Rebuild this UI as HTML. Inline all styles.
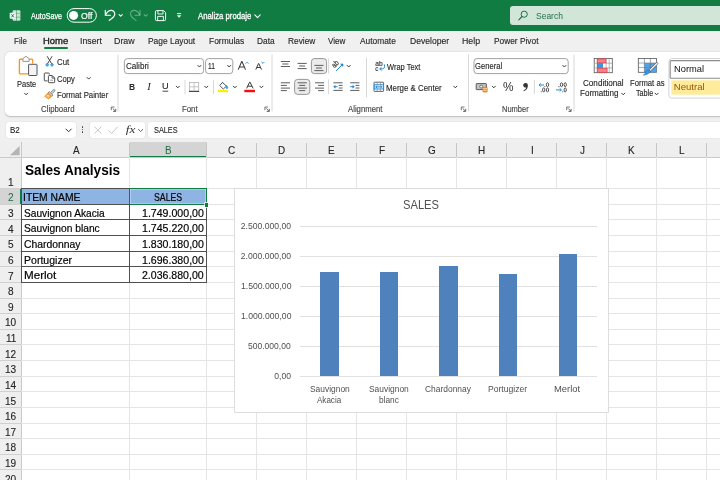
<!DOCTYPE html>
<html><head><meta charset="utf-8"><title>Excel</title>
<style>
html,body{margin:0;padding:0;}
body{width:720px;height:480px;overflow:hidden;position:relative;background:#fff;will-change:transform;font-family:"Liberation Sans",sans-serif;}
.t{position:absolute;white-space:nowrap;line-height:1;transform-origin:0 50%;display:block;}
.a{position:absolute;}
svg{position:absolute;overflow:visible;}

</style></head>
<body>
<div class="a" style="left:0px;top:0px;width:720px;height:31px;background:#107c41;"></div>
<div class="a" style="left:0px;top:31px;width:720px;height:111px;background:#f0f0f0;"></div>
<div class="a" style="left:5px;top:51.5px;width:720px;height:64px;background:#ffffff;border-radius:5px 0 0 5px;box-shadow:0 0.5px 1.5px rgba(0,0,0,.22);"></div>
<div class="a" style="left:44px;top:47px;width:24px;height:2px;background:#107c41;border-radius:1px;"></div>
<div class="a" style="left:510px;top:6px;width:215px;height:19.3px;background:#d1e5d9;border-radius:3px 0 0 3px;"></div>
<div class="a" style="left:5.6px;top:121.5px;width:70px;height:16px;background:#fff;border-radius:3px;box-shadow:0 0 0 0.5px #e2e2e2;"></div>
<div class="a" style="left:90px;top:121.5px;width:55px;height:16px;background:#fff;border-radius:3px;box-shadow:0 0 0 0.5px #e2e2e2;"></div>
<div class="a" style="left:148.4px;top:121.5px;width:580px;height:16px;background:#fff;border-radius:3px 0 0 3px;box-shadow:0 0 0 0.5px #e2e2e2;"></div>
<div class="a" style="left:81.7px;top:126.4px;width:1.5px;height:1.5px;background:#3c3c3c;border-radius:1px;"></div>
<div class="a" style="left:81.7px;top:128.9px;width:1.5px;height:1.5px;background:#3c3c3c;border-radius:1px;"></div>
<div class="a" style="left:81.7px;top:131.4px;width:1.5px;height:1.5px;background:#3c3c3c;border-radius:1px;"></div>
<div class="a" style="left:0px;top:142px;width:720px;height:15px;background:#efefef;"></div>
<div class="a" style="left:0px;top:157px;width:21px;height:323px;background:#efefef;"></div>
<div class="a" style="left:0px;top:157px;width:720px;height:0.8px;background:#c9c9c9;"></div>
<div class="a" style="left:20.6px;top:142px;width:0.9px;height:338px;background:#c9c9c9;"></div>
<div class="a" style="left:129.5px;top:142px;width:77px;height:15px;background:#d4d4d4;"></div>
<div class="a" style="left:129.5px;top:155.6px;width:77px;height:1.5px;background:#107c41;"></div>
<div class="a" style="left:0px;top:188.6px;width:21px;height:15.6px;background:#d4d4d4;"></div>
<div class="a" style="left:19.6px;top:188.6px;width:1.8px;height:15.6px;background:#107c41;"></div>
<svg style="left:9.5px;top:146px" width="10" height="9.5" viewBox="0 0 10 9.5"><path d="M9.6 0V9.3H0Z" fill="#b4b4b4"/></svg>
<div class="a" style="left:129.1px;top:143px;width:0.9px;height:14px;background:#c6c6c6;"></div>
<div class="a" style="left:129.1px;top:157px;width:0.9px;height:323px;background:#e5e5e5;"></div>
<div class="a" style="left:206.1px;top:143px;width:0.9px;height:14px;background:#c6c6c6;"></div>
<div class="a" style="left:206.1px;top:157px;width:0.9px;height:323px;background:#e5e5e5;"></div>
<div class="a" style="left:256.1px;top:143px;width:0.9px;height:14px;background:#c6c6c6;"></div>
<div class="a" style="left:256.1px;top:157px;width:0.9px;height:323px;background:#e5e5e5;"></div>
<div class="a" style="left:306.1px;top:143px;width:0.9px;height:14px;background:#c6c6c6;"></div>
<div class="a" style="left:306.1px;top:157px;width:0.9px;height:323px;background:#e5e5e5;"></div>
<div class="a" style="left:356.1px;top:143px;width:0.9px;height:14px;background:#c6c6c6;"></div>
<div class="a" style="left:356.1px;top:157px;width:0.9px;height:323px;background:#e5e5e5;"></div>
<div class="a" style="left:406.1px;top:143px;width:0.9px;height:14px;background:#c6c6c6;"></div>
<div class="a" style="left:406.1px;top:157px;width:0.9px;height:323px;background:#e5e5e5;"></div>
<div class="a" style="left:456.1px;top:143px;width:0.9px;height:14px;background:#c6c6c6;"></div>
<div class="a" style="left:456.1px;top:157px;width:0.9px;height:323px;background:#e5e5e5;"></div>
<div class="a" style="left:506.1px;top:143px;width:0.9px;height:14px;background:#c6c6c6;"></div>
<div class="a" style="left:506.1px;top:157px;width:0.9px;height:323px;background:#e5e5e5;"></div>
<div class="a" style="left:556.1px;top:143px;width:0.9px;height:14px;background:#c6c6c6;"></div>
<div class="a" style="left:556.1px;top:157px;width:0.9px;height:323px;background:#e5e5e5;"></div>
<div class="a" style="left:606.1px;top:143px;width:0.9px;height:14px;background:#c6c6c6;"></div>
<div class="a" style="left:606.1px;top:157px;width:0.9px;height:323px;background:#e5e5e5;"></div>
<div class="a" style="left:656.1px;top:143px;width:0.9px;height:14px;background:#c6c6c6;"></div>
<div class="a" style="left:656.1px;top:157px;width:0.9px;height:323px;background:#e5e5e5;"></div>
<div class="a" style="left:706.1px;top:143px;width:0.9px;height:14px;background:#c6c6c6;"></div>
<div class="a" style="left:706.1px;top:157px;width:0.9px;height:323px;background:#e5e5e5;"></div>
<div class="a" style="left:21px;top:188.2px;width:699px;height:0.9px;background:#e5e5e5;"></div>
<div class="a" style="left:0px;top:188.2px;width:21px;height:0.9px;background:#d0d0d0;"></div>
<div class="a" style="left:21px;top:203.825px;width:699px;height:0.9px;background:#e5e5e5;"></div>
<div class="a" style="left:0px;top:203.825px;width:21px;height:0.9px;background:#d0d0d0;"></div>
<div class="a" style="left:21px;top:219.45px;width:699px;height:0.9px;background:#e5e5e5;"></div>
<div class="a" style="left:0px;top:219.45px;width:21px;height:0.9px;background:#d0d0d0;"></div>
<div class="a" style="left:21px;top:235.075px;width:699px;height:0.9px;background:#e5e5e5;"></div>
<div class="a" style="left:0px;top:235.075px;width:21px;height:0.9px;background:#d0d0d0;"></div>
<div class="a" style="left:21px;top:250.7px;width:699px;height:0.9px;background:#e5e5e5;"></div>
<div class="a" style="left:0px;top:250.7px;width:21px;height:0.9px;background:#d0d0d0;"></div>
<div class="a" style="left:21px;top:266.32500000000005px;width:699px;height:0.9px;background:#e5e5e5;"></div>
<div class="a" style="left:0px;top:266.32500000000005px;width:21px;height:0.9px;background:#d0d0d0;"></div>
<div class="a" style="left:21px;top:281.95000000000005px;width:699px;height:0.9px;background:#e5e5e5;"></div>
<div class="a" style="left:0px;top:281.95000000000005px;width:21px;height:0.9px;background:#d0d0d0;"></div>
<div class="a" style="left:21px;top:297.57500000000005px;width:699px;height:0.9px;background:#e5e5e5;"></div>
<div class="a" style="left:0px;top:297.57500000000005px;width:21px;height:0.9px;background:#d0d0d0;"></div>
<div class="a" style="left:21px;top:313.20000000000005px;width:699px;height:0.9px;background:#e5e5e5;"></div>
<div class="a" style="left:0px;top:313.20000000000005px;width:21px;height:0.9px;background:#d0d0d0;"></div>
<div class="a" style="left:21px;top:328.82500000000005px;width:699px;height:0.9px;background:#e5e5e5;"></div>
<div class="a" style="left:0px;top:328.82500000000005px;width:21px;height:0.9px;background:#d0d0d0;"></div>
<div class="a" style="left:21px;top:344.45000000000005px;width:699px;height:0.9px;background:#e5e5e5;"></div>
<div class="a" style="left:0px;top:344.45000000000005px;width:21px;height:0.9px;background:#d0d0d0;"></div>
<div class="a" style="left:21px;top:360.07500000000005px;width:699px;height:0.9px;background:#e5e5e5;"></div>
<div class="a" style="left:0px;top:360.07500000000005px;width:21px;height:0.9px;background:#d0d0d0;"></div>
<div class="a" style="left:21px;top:375.70000000000005px;width:699px;height:0.9px;background:#e5e5e5;"></div>
<div class="a" style="left:0px;top:375.70000000000005px;width:21px;height:0.9px;background:#d0d0d0;"></div>
<div class="a" style="left:21px;top:391.32500000000005px;width:699px;height:0.9px;background:#e5e5e5;"></div>
<div class="a" style="left:0px;top:391.32500000000005px;width:21px;height:0.9px;background:#d0d0d0;"></div>
<div class="a" style="left:21px;top:406.95000000000005px;width:699px;height:0.9px;background:#e5e5e5;"></div>
<div class="a" style="left:0px;top:406.95000000000005px;width:21px;height:0.9px;background:#d0d0d0;"></div>
<div class="a" style="left:21px;top:422.57500000000005px;width:699px;height:0.9px;background:#e5e5e5;"></div>
<div class="a" style="left:0px;top:422.57500000000005px;width:21px;height:0.9px;background:#d0d0d0;"></div>
<div class="a" style="left:21px;top:438.20000000000005px;width:699px;height:0.9px;background:#e5e5e5;"></div>
<div class="a" style="left:0px;top:438.20000000000005px;width:21px;height:0.9px;background:#d0d0d0;"></div>
<div class="a" style="left:21px;top:453.82500000000005px;width:699px;height:0.9px;background:#e5e5e5;"></div>
<div class="a" style="left:0px;top:453.82500000000005px;width:21px;height:0.9px;background:#d0d0d0;"></div>
<div class="a" style="left:21px;top:469.45000000000005px;width:699px;height:0.9px;background:#e5e5e5;"></div>
<div class="a" style="left:0px;top:469.45000000000005px;width:21px;height:0.9px;background:#d0d0d0;"></div>
<div class="a" style="left:21px;top:485.07500000000005px;width:699px;height:0.9px;background:#e5e5e5;"></div>
<div class="a" style="left:0px;top:485.07500000000005px;width:21px;height:0.9px;background:#d0d0d0;"></div>
<div class="a" style="left:21.5px;top:188.9px;width:185px;height:16px;background:#8db4e2;"></div>
<div class="a" style="left:21px;top:188.15px;width:186px;height:0.95px;background:#505050;"></div>
<div class="a" style="left:21px;top:203.775px;width:186px;height:0.95px;background:#505050;"></div>
<div class="a" style="left:21px;top:219.4px;width:186px;height:0.95px;background:#505050;"></div>
<div class="a" style="left:21px;top:235.025px;width:186px;height:0.95px;background:#505050;"></div>
<div class="a" style="left:21px;top:250.65px;width:186px;height:0.95px;background:#505050;"></div>
<div class="a" style="left:21px;top:266.27500000000003px;width:186px;height:0.95px;background:#505050;"></div>
<div class="a" style="left:21px;top:281.90000000000003px;width:186px;height:0.95px;background:#505050;"></div>
<div class="a" style="left:20.75px;top:188.6px;width:0.95px;height:94.25000000000003px;background:#505050;"></div>
<div class="a" style="left:129.05px;top:188.6px;width:0.95px;height:94.25000000000003px;background:#505050;"></div>
<div class="a" style="left:206.05px;top:188.6px;width:0.95px;height:94.25000000000003px;background:#505050;"></div>
<div class="a" style="left:128.6px;top:187.7px;width:76.4px;height:15.2px;border:1.6px solid #107c41;box-shadow:inset 0 0 0 0.6px rgba(255,255,255,.55);"></div>
<div class="a" style="left:204.6px;top:203.1px;width:3.6px;height:3.6px;background:#107c41;box-shadow:0 0 0 0.7px #fff;"></div>
<div class="a" style="left:234.5px;top:188.5px;width:373.7px;height:223.7px;background:#fff;box-shadow:0 0 0 0.9px #dadada;"></div>
<div class="a" style="left:299.5px;top:225.8px;width:297.5px;height:0.9px;background:#e1e1e1;"></div>
<div class="a" style="left:299.5px;top:255.8px;width:297.5px;height:0.9px;background:#e1e1e1;"></div>
<div class="a" style="left:299.5px;top:285.8px;width:297.5px;height:0.9px;background:#e1e1e1;"></div>
<div class="a" style="left:299.5px;top:315.8px;width:297.5px;height:0.9px;background:#e1e1e1;"></div>
<div class="a" style="left:299.5px;top:345.8px;width:297.5px;height:0.9px;background:#e1e1e1;"></div>
<div class="a" style="left:299.5px;top:375.8px;width:297.5px;height:0.9px;background:#e1e1e1;"></div>
<div class="a" style="left:320px;top:271.6px;width:18.7px;height:104.69999999999999px;background:#4f81bd;"></div>
<div class="a" style="left:379.5px;top:271.8px;width:18.7px;height:104.5px;background:#4f81bd;"></div>
<div class="a" style="left:438.9px;top:266.4px;width:18.7px;height:109.90000000000003px;background:#4f81bd;"></div>
<div class="a" style="left:498.7px;top:274.4px;width:18.7px;height:101.90000000000003px;background:#4f81bd;"></div>
<div class="a" style="left:558.5px;top:254.1px;width:18.7px;height:122.20000000000002px;background:#4f81bd;"></div>
<svg width="720" height="480" viewBox="0 0 720 480" style="left:0;top:0">
<rect x="12.6" y="10.2" width="7.8" height="10.6" fill="rgba(255,255,255,.78)" stroke="none" stroke-width="0" rx="1.2" />
<line x1="16.6" y1="10.2" x2="16.6" y2="20.8" stroke="#107c41" stroke-width="0.7" opacity=".7"/>
<line x1="12.6" y1="13.7" x2="20.4" y2="13.7" stroke="#107c41" stroke-width="0.6" opacity=".6"/>
<line x1="12.6" y1="17.2" x2="20.4" y2="17.2" stroke="#107c41" stroke-width="0.6" opacity=".6"/>
<rect x="9.7" y="12.8" width="5.9" height="5.9" fill="#f2f8f4" stroke="none" stroke-width="0" rx="0.8" />
<path d="M11.4 14.2L13.9 17.4M13.9 14.2L11.4 17.4" stroke="#107c41" stroke-width="0.9" fill="none" />
<rect x="67.2" y="8.6" width="29.2" height="13.6" fill="none" stroke="#fff" stroke-width="1" rx="6.8" />
<circle cx="73.6" cy="15.4" r="4.5" fill="#fff"/>
<path d="M105.3 10.2V15.2H110.4" stroke="#fff" stroke-width="1.15" fill="none" stroke-linejoin="round" stroke-linecap="round"/>
<path d="M105.6 14.9C107.2 11.6 109.6 10.2 111.6 10.4C114 10.7 115.3 13 114.6 15.2C113.9 17.2 111.5 18.7 109.2 20.5" stroke="#fff" stroke-width="1.15" fill="none" stroke-linecap="round"/>
<path d="M119.10 14.60L120.70 16.20L122.30 14.60" stroke="#fff" stroke-width="1.05" fill="none" stroke-linecap="round" stroke-linejoin="round" opacity="1"/>
<path d="M140 10.2V15.2H134.9" stroke="#fff" stroke-width="1.1" fill="none" stroke-linejoin="round" stroke-linecap="round" opacity=".36"/>
<path d="M139.7 14.9C138.1 11.6 135.7 10.2 133.7 10.4C131.3 10.7 130 13 130.7 15.2C131.4 17.2 133.8 18.7 136.1 20.5" stroke="#fff" stroke-width="1.1" fill="none" stroke-linecap="round" opacity=".36"/>
<path d="M144.10 14.60L145.70 16.20L147.30 14.60" stroke="#fff" stroke-width="1.05" fill="none" stroke-linecap="round" stroke-linejoin="round" opacity="0.36"/>
<path d="M156.6 10.6H163.6L165.6 12.6V19.4Q165.6 20.6 164.4 20.6H156.6Q155.4 20.6 155.4 19.4V11.8Q155.4 10.6 156.6 10.6Z" stroke="#fff" stroke-width="1" fill="none" />
<path d="M157.9 10.8V14H163V10.8" stroke="#fff" stroke-width="0.9" fill="none" />
<path d="M157.6 20.4V16.4H163.4V20.4" stroke="#fff" stroke-width="0.9" fill="none" />
<line x1="177" y1="13.6" x2="181.2" y2="13.6" stroke="#fff" stroke-width="0.9" />
<path d="M177.3 15.4H180.9L179.1 17.6Z" stroke="#fff" stroke-width="0.4" fill="#fff" />
<path d="M254.80 14.85L257.50 17.55L260.20 14.85" stroke="#fff" stroke-width="1.1" fill="none" stroke-linecap="round" stroke-linejoin="round" opacity="1"/>
<circle cx="524.2" cy="14.2" r="3.1" fill="none" stroke="#26704a" stroke-width="1"/>
<line x1="522" y1="16.5" x2="518.8" y2="19.8" stroke="#26704a" stroke-width="1.1" stroke-linecap="round"/>
<line x1="118" y1="54.6" x2="118" y2="111.4" stroke="#d4d4d4" stroke-width="0.9" />
<line x1="272" y1="54.6" x2="272" y2="111.4" stroke="#d4d4d4" stroke-width="0.9" />
<line x1="468.5" y1="54.6" x2="468.5" y2="111.4" stroke="#d4d4d4" stroke-width="0.9" />
<line x1="574" y1="54.6" x2="574" y2="111.4" stroke="#d4d4d4" stroke-width="0.9" />
<line x1="366.5" y1="57.6" x2="366.5" y2="97.4" stroke="#d4d4d4" stroke-width="0.9" />
<line x1="185" y1="79.8" x2="185" y2="94.3" stroke="#d4d4d4" stroke-width="0.9" />
<line x1="213.5" y1="79.8" x2="213.5" y2="94.3" stroke="#d4d4d4" stroke-width="0.9" />
<line x1="534.4" y1="79.8" x2="534.4" y2="94.3" stroke="#d4d4d4" stroke-width="0.9" />
<line x1="328.6" y1="58.4" x2="328.6" y2="73.7" stroke="#d4d4d4" stroke-width="0.9" />
<line x1="328.6" y1="79.4" x2="328.6" y2="94.5" stroke="#d4d4d4" stroke-width="0.9" />
<path d="M114.5 107.0H111.30000000000001V110.19999999999999" stroke="#555" stroke-width="0.8" fill="none" />
<path d="M112.7 108.39999999999999L115.5 111.19999999999999M115.7 108.8V111.39999999999999H113.10000000000001" stroke="#555" stroke-width="0.9" fill="none" />
<path d="M268.1 107.0H264.9V110.19999999999999" stroke="#555" stroke-width="0.8" fill="none" />
<path d="M266.3 108.39999999999999L269.1 111.19999999999999M269.3 108.8V111.39999999999999H266.7" stroke="#555" stroke-width="0.9" fill="none" />
<path d="M464.5 107.0H461.29999999999995V110.19999999999999" stroke="#555" stroke-width="0.8" fill="none" />
<path d="M462.7 108.39999999999999L465.5 111.19999999999999M465.7 108.8V111.39999999999999H463.09999999999997" stroke="#555" stroke-width="0.9" fill="none" />
<path d="M569.9 107.0H566.6999999999999V110.19999999999999" stroke="#555" stroke-width="0.8" fill="none" />
<path d="M568.0999999999999 108.39999999999999L570.9 111.19999999999999M571.0999999999999 108.8V111.39999999999999H568.5" stroke="#555" stroke-width="0.9" fill="none" />
<path d="M22.8 59.2H20.3Q19.4 59.2 19.4 60.1V73Q19.4 73.9 20.3 73.9H28" stroke="#f7941d" stroke-width="1.35" fill="none" />
<path d="M29.3 59.2H31.8Q32.7 59.2 32.7 60.1V63.6" stroke="#f7941d" stroke-width="1.2" fill="none" />
<path d="M22.9 61.4V58.6L26 56.3L29.1 58.6V61.4Z" stroke="#8a8a8a" stroke-width="0.9" fill="#fff" />
<rect x="28.6" y="64.3" width="8.4" height="11.2" fill="#f4f4f4" stroke="#555" stroke-width="1" rx="0.6" />
<path d="M24.55 93.20L26.10 94.80L27.65 93.20" stroke="#3a3a3a" stroke-width="1.0" fill="none" stroke-linecap="round" stroke-linejoin="round" opacity="1"/>
<path d="M47.3 56.6L51.6 63.6M51.9 56.6L47.6 63.6" stroke="#444" stroke-width="1.0" fill="none" stroke-linecap="round"/>
<circle cx="47.2" cy="64.8" r="1.35" fill="#5aa8ea" stroke="#1a86d9" stroke-width=".6"/>
<circle cx="52" cy="64.8" r="1.35" fill="#5aa8ea" stroke="#1a86d9" stroke-width=".6"/>
<path d="M47.6 80.9H45Q44.3 80.9 44.3 80.2V73.7Q44.3 73 45 73H48.6Q49.3 73 49.3 73.7V74.6" stroke="#444" stroke-width="0.95" fill="none" />
<path d="M48.4 76.3Q48.4 75.5 49.2 75.5H52.2L54.7 78V81.9Q54.7 82.7 53.9 82.7H49.2Q48.4 82.7 48.4 81.9Z" stroke="#444" stroke-width="0.95" fill="#fff" />
<path d="M52.1 75.7V78.1H54.5" stroke="#444" stroke-width="0.8" fill="none" />
<line x1="50.2" y1="80.2" x2="53" y2="80.2" stroke="#666" stroke-width="0.7" />
<path d="M87.15 77.50L88.70 79.10L90.25 77.50" stroke="#3a3a3a" stroke-width="1.0" fill="none" stroke-linecap="round" stroke-linejoin="round" opacity="1"/>
<path d="M50.6 92.6L53.6 89.8Q54.2 89.3 54.7 89.8Q55.2 90.4 54.6 91L51.8 93.8" stroke="#666" stroke-width="0.9" fill="#eee" />
<path d="M49.3 91.6L52.9 95.2L51.6 96.3L48.2 92.9Z" stroke="#666" stroke-width="0.8" fill="#ddd" />
<path d="M48 93.3L51.1 96.5L48.6 98.7L44.9 96.4Z" stroke="#f7941d" stroke-width="1.1" fill="#fde0bd" stroke-linejoin="round"/>
<path d="M46.6 96.8L49.6 96.9" stroke="#f7941d" stroke-width="0.7" fill="none" />
<rect x="124.4" y="58.6" width="79.2" height="15" fill="#fff" stroke="#969696" stroke-width="0.9" rx="3" />
<rect x="205.6" y="58.6" width="27.2" height="15" fill="#fff" stroke="#969696" stroke-width="0.9" rx="3" />
<path d="M197.85 65.40L199.40 67.00L200.95 65.40" stroke="#3a3a3a" stroke-width="1.0" fill="none" stroke-linecap="round" stroke-linejoin="round" opacity="1"/>
<path d="M227.65 65.40L229.20 67.00L230.75 65.40" stroke="#3a3a3a" stroke-width="1.0" fill="none" stroke-linecap="round" stroke-linejoin="round" opacity="1"/>
<path d="M238.2 69.6L241.7 61.6H242L245.5 69.6M239.5 66.9H244.2" stroke="#3a3a3a" stroke-width="1.05" fill="none" />
<path d="M245.6 63.6L247 62.2L248.4 63.6" stroke="#1a86d9" stroke-width="0.9" fill="none" />
<path d="M255.8 69.6L258.5 63.5H258.8L261.5 69.6M256.8 67.5H260.5" stroke="#3a3a3a" stroke-width="1.0" fill="none" />
<path d="M261.6 62L263 63.4L264.4 62" stroke="#1a86d9" stroke-width="0.9" fill="none" />
<line x1="162.6" y1="91.2" x2="168.2" y2="91.2" stroke="#333" stroke-width="0.9" />
<path d="M176.25 86.20L177.80 87.80L179.35 86.20" stroke="#3a3a3a" stroke-width="1.0" fill="none" stroke-linecap="round" stroke-linejoin="round" opacity="1"/>
<rect x="189.5" y="82.5" width="9.2" height="8.8" fill="none" stroke="#b4b4b4" stroke-width="0.8" rx="0" />
<line x1="189.1" y1="91.4" x2="199.1" y2="91.4" stroke="#444" stroke-width="1.2" />
<line x1="194.1" y1="82.5" x2="194.1" y2="91.2" stroke="#b8b8b8" stroke-width="0.8" />
<line x1="189.7" y1="86.8" x2="198.5" y2="86.8" stroke="#b8b8b8" stroke-width="0.8" />
<path d="M204.75 86.20L206.30 87.80L207.85 86.20" stroke="#3a3a3a" stroke-width="1.0" fill="none" stroke-linecap="round" stroke-linejoin="round" opacity="1"/>
<path d="M222.6 82.5L226.4 86.1L223.3 89L219.7 85.5Z" stroke="#444" stroke-width="0.9" fill="#fff" stroke-linejoin="round"/>
<path d="M221 84L222.8 82.1" stroke="#444" stroke-width="0.8" fill="none" />
<path d="M226.6 85.4Q228.6 87.4 227.4 88.6Q226.2 89 226.2 87.4Z" stroke="#1a86d9" stroke-width="0.5" fill="#1a86d9" />
<rect x="217.6" y="89.8" width="10.5" height="2.4" fill="#fff000" stroke="none" stroke-width="1" rx="0" />
<path d="M233.35 86.20L234.90 87.80L236.45 86.20" stroke="#3a3a3a" stroke-width="1.0" fill="none" stroke-linecap="round" stroke-linejoin="round" opacity="1"/>
<path d="M246.6 88.4L249.7 82.1H250L253.1 88.4M247.8 86.2H252" stroke="#3a3a3a" stroke-width="1.0" fill="none" />
<rect x="244.3" y="89.8" width="10.7" height="2.4" fill="#f80d0d" stroke="none" stroke-width="1" rx="0" />
<path d="M259.85 86.20L261.40 87.80L262.95 86.20" stroke="#3a3a3a" stroke-width="1.0" fill="none" stroke-linecap="round" stroke-linejoin="round" opacity="1"/>
<line x1="280.8" y1="61.5" x2="290" y2="61.5" stroke="#555" stroke-width="0.95" />
<line x1="282.36" y1="64" x2="288.44" y2="64" stroke="#555" stroke-width="0.95" />
<line x1="280.8" y1="66.5" x2="290" y2="66.5" stroke="#555" stroke-width="0.95" />
<line x1="297.6" y1="63.4" x2="306.7" y2="63.4" stroke="#555" stroke-width="0.95" />
<line x1="299.15" y1="66" x2="305.15" y2="66" stroke="#555" stroke-width="0.95" />
<line x1="297.6" y1="68.6" x2="306.7" y2="68.6" stroke="#555" stroke-width="0.95" />
<rect x="311.4" y="58.6" width="15.2" height="15" fill="#ebebeb" stroke="#8c8c8c" stroke-width="0.9" rx="3" />
<line x1="314.4" y1="65.4" x2="323.5" y2="65.4" stroke="#555" stroke-width="0.95" />
<line x1="315.95" y1="68" x2="321.95" y2="68" stroke="#555" stroke-width="0.95" />
<line x1="314.4" y1="70.6" x2="323.5" y2="70.6" stroke="#555" stroke-width="0.95" />
<text x="334.2" y="68.2" font-family="Liberation Sans, sans-serif" font-size="7.4" fill="#333" stroke="#333" stroke-width=".2" textLength="7" lengthAdjust="spacingAndGlyphs" transform="rotate(-42 334.2 68.2)">ab</text>
<path d="M336.2 70.7L342.3 64.6" stroke="#1a86d9" stroke-width="1.0" fill="none" stroke-linecap="round"/>
<path d="M340.6 64H343V66.4Z" stroke="#1a86d9" stroke-width="0.6" fill="#1a86d9" stroke-linejoin="round"/>
<path d="M347.15 65.40L348.70 67.00L350.25 65.40" stroke="#3a3a3a" stroke-width="1.0" fill="none" stroke-linecap="round" stroke-linejoin="round" opacity="1"/>
<line x1="280.8" y1="82.8" x2="290" y2="82.8" stroke="#555" stroke-width="0.95" />
<line x1="280.8" y1="85.4" x2="286.87" y2="85.4" stroke="#555" stroke-width="0.95" />
<line x1="280.8" y1="88.1" x2="290" y2="88.1" stroke="#555" stroke-width="0.95" />
<line x1="280.8" y1="90.6" x2="286.87" y2="90.6" stroke="#555" stroke-width="0.95" />
<rect x="294.6" y="79.4" width="15.2" height="15" fill="#ebebeb" stroke="#8c8c8c" stroke-width="0.9" rx="3" />
<line x1="297.6" y1="82.8" x2="306.8" y2="82.8" stroke="#555" stroke-width="0.95" />
<line x1="299.16" y1="85.4" x2="305.24" y2="85.4" stroke="#555" stroke-width="0.95" />
<line x1="297.6" y1="88.1" x2="306.8" y2="88.1" stroke="#555" stroke-width="0.95" />
<line x1="299.16" y1="90.6" x2="305.24" y2="90.6" stroke="#555" stroke-width="0.95" />
<line x1="315" y1="82.8" x2="324.1" y2="82.8" stroke="#555" stroke-width="0.95" />
<line x1="318.09" y1="85.4" x2="324.1" y2="85.4" stroke="#555" stroke-width="0.95" />
<line x1="315" y1="88.1" x2="324.1" y2="88.1" stroke="#555" stroke-width="0.95" />
<line x1="318.09" y1="90.6" x2="324.1" y2="90.6" stroke="#555" stroke-width="0.95" />
<line x1="333.4" y1="82.8" x2="342.59999999999997" y2="82.8" stroke="#555" stroke-width="0.95" />
<line x1="333.4" y1="90.4" x2="342.59999999999997" y2="90.4" stroke="#555" stroke-width="0.95" />
<line x1="338.79999999999995" y1="85.4" x2="342.59999999999997" y2="85.4" stroke="#555" stroke-width="0.95" />
<line x1="338.79999999999995" y1="88" x2="342.59999999999997" y2="88" stroke="#555" stroke-width="0.95" />
<path d="M334.4 86.7H337.59999999999997" stroke="#1a86d9" stroke-width="0.95" fill="none" />
<path d="M335.29999999999995 85.2L333.4 86.7L335.29999999999995 88.2Z" stroke="#1a86d9" stroke-width="0.3" fill="#1a86d9" />
<line x1="350.2" y1="82.8" x2="359.4" y2="82.8" stroke="#555" stroke-width="0.95" />
<line x1="350.2" y1="90.4" x2="359.4" y2="90.4" stroke="#555" stroke-width="0.95" />
<line x1="355.59999999999997" y1="85.4" x2="359.4" y2="85.4" stroke="#555" stroke-width="0.95" />
<line x1="355.59999999999997" y1="88" x2="359.4" y2="88" stroke="#555" stroke-width="0.95" />
<path d="M350.2 86.7H353.4" stroke="#1a86d9" stroke-width="0.95" fill="none" />
<path d="M352.59999999999997 85.2L354.5 86.7L352.59999999999997 88.2Z" stroke="#1a86d9" stroke-width="0.3" fill="#1a86d9" />
<text x="375.3" y="66.4" font-family="Liberation Sans, sans-serif" font-size="6.8" fill="#333" stroke="#333" stroke-width=".15" textLength="7.4" lengthAdjust="spacingAndGlyphs">ab</text>
<text x="375.3" y="70.8" font-family="Liberation Sans, sans-serif" font-size="6.8" fill="#333" stroke="#333" stroke-width=".15" textLength="3.1" lengthAdjust="spacingAndGlyphs">c</text>
<path d="M384.3 64.4Q385.2 68.9 382.4 68.9H379.9" stroke="#1a86d9" stroke-width="1.0" fill="none" />
<path d="M381.5 67.2L379.7 68.9L381.5 70.6" stroke="#1a86d9" stroke-width="1.0" fill="none" />
<rect x="374" y="82.2" width="9.6" height="9.2" fill="#fff" stroke="#555" stroke-width="0.9" rx="0.5" />
<rect x="374.3" y="84.7" width="9" height="4.3" fill="#d6ebfc" stroke="#1a86d9" stroke-width="0.8" rx="0" />
<line x1="377.2" y1="82.2" x2="377.2" y2="84.6" stroke="#777" stroke-width="0.6" />
<line x1="380.4" y1="82.2" x2="380.4" y2="84.6" stroke="#777" stroke-width="0.6" />
<line x1="377.2" y1="89.1" x2="377.2" y2="91.4" stroke="#777" stroke-width="0.6" />
<line x1="380.4" y1="89.1" x2="380.4" y2="91.4" stroke="#777" stroke-width="0.6" />
<path d="M375.8 86.85H381.8M377.2 85.7L375.8 86.85L377.2 88M380.4 85.7L381.8 86.85L380.4 88" stroke="#1272c4" stroke-width="0.75" fill="none" />
<path d="M453.75 86.20L455.30 87.80L456.85 86.20" stroke="#3a3a3a" stroke-width="1.0" fill="none" stroke-linecap="round" stroke-linejoin="round" opacity="1"/>
<rect x="474" y="58.6" width="94.2" height="15" fill="#fff" stroke="#969696" stroke-width="0.9" rx="3" />
<path d="M562.85 65.40L564.40 67.00L565.95 65.40" stroke="#3a3a3a" stroke-width="1.0" fill="none" stroke-linecap="round" stroke-linejoin="round" opacity="1"/>
<rect x="476.2" y="83.6" width="10.2" height="6" fill="#c4c4c4" stroke="#4a4a4a" stroke-width="0.9" rx="0.5" />
<circle cx="481.2" cy="86.6" r="1.5" fill="#e8e8e8" stroke="#555" stroke-width=".7"/>
<rect x="482.9" y="87.2" width="4.3" height="4.9" fill="#f7941d" stroke="#d9730b" stroke-width="0.6" rx="0.6" />
<line x1="483" y1="88.6" x2="487" y2="88.6" stroke="#fff" stroke-width="0.5" />
<line x1="483" y1="90.3" x2="487" y2="90.3" stroke="#fff" stroke-width="0.5" />
<path d="M492.25 86.20L493.80 87.80L495.35 86.20" stroke="#3a3a3a" stroke-width="1.0" fill="none" stroke-linecap="round" stroke-linejoin="round" opacity="1"/>
<path d="M525.6 82.9A2.3 2.3 0 1 0 526.4 87.3Q526 89.4 523.4 90.6L523.8 91.2Q527.9 89.6 527.9 85.3A2.3 2.3 0 0 0 525.6 82.9Z" stroke="none" stroke-width="0" fill="#333" />
<path d="M539.1 85H544M540.7 83.4L539.1 85L540.7 86.6" stroke="#1a86d9" stroke-width="0.95" fill="none" />
<circle cx="544.9" cy="86.6" r=".55" fill="#3c3c3c"/>
<ellipse cx="547.5" cy="84.7" rx="1.15" ry="1.95" fill="none" stroke="#3c3c3c" stroke-width=".9"/>
<circle cx="541.2" cy="91.8" r=".55" fill="#3c3c3c"/>
<ellipse cx="543.7" cy="89.9" rx="1.15" ry="1.95" fill="none" stroke="#3c3c3c" stroke-width=".9"/>
<ellipse cx="547.5" cy="89.9" rx="1.15" ry="1.95" fill="none" stroke="#3c3c3c" stroke-width=".9"/>
<circle cx="558.9" cy="86.6" r=".55" fill="#3c3c3c"/>
<ellipse cx="561.5" cy="84.7" rx="1.15" ry="1.95" fill="none" stroke="#3c3c3c" stroke-width=".9"/>
<ellipse cx="565.2" cy="84.7" rx="1.15" ry="1.95" fill="none" stroke="#3c3c3c" stroke-width=".9"/>
<path d="M556 89.9H561.3M559.7 88.3L561.3 89.9L559.7 91.5" stroke="#1a86d9" stroke-width="0.95" fill="none" />
<circle cx="562.8" cy="91.8" r=".55" fill="#3c3c3c"/>
<ellipse cx="565.2" cy="89.9" rx="1.15" ry="1.95" fill="none" stroke="#3c3c3c" stroke-width=".9"/>
<rect x="594.2" y="58.5" width="18.1" height="14.2" fill="#fff" stroke="#555" stroke-width="0.8" rx="0" />
<line x1="597.2" y1="58.5" x2="597.2" y2="72.7" stroke="#8a8a8a" stroke-width="0.6" />
<line x1="606.1" y1="58.5" x2="606.1" y2="72.7" stroke="#8a8a8a" stroke-width="0.6" />
<line x1="609.2" y1="58.5" x2="609.2" y2="72.7" stroke="#8a8a8a" stroke-width="0.6" />
<line x1="594.2" y1="63.2" x2="612.3" y2="63.2" stroke="#8a8a8a" stroke-width="0.6" />
<line x1="594.2" y1="67.9" x2="612.3" y2="67.9" stroke="#8a8a8a" stroke-width="0.6" />
<rect x="597.3" y="58.9" width="8.7" height="3.9" fill="#f57f8b" stroke="#e03a48" stroke-width="0.7" rx="0" />
<rect x="597.3" y="63.7" width="5.4" height="3.7" fill="#3a96e3" stroke="#1a78c8" stroke-width="0.6" rx="0" />
<rect x="597.3" y="68.4" width="9.8" height="3.9" fill="#f57f8b" stroke="#e03a48" stroke-width="0.7" rx="0" />
<path d="M621.65 93.20L623.20 94.80L624.75 93.20" stroke="#3a3a3a" stroke-width="1.0" fill="none" stroke-linecap="round" stroke-linejoin="round" opacity="1"/>
<rect x="638.3" y="58.5" width="18.2" height="13.8" fill="#fff" stroke="#555" stroke-width="0.8" rx="0" />
<rect x="644.4" y="63" width="12.1" height="9.3" fill="#4fa3e8" stroke="none" stroke-width="1" rx="0" />
<line x1="644.4" y1="58.5" x2="644.4" y2="72.3" stroke="#5a6a7a" stroke-width="0.6" />
<line x1="650.4" y1="58.5" x2="650.4" y2="72.3" stroke="#5a6a7a" stroke-width="0.6" />
<line x1="638.3" y1="63" x2="656.5" y2="63" stroke="#6a7a8a" stroke-width="0.6" />
<line x1="638.3" y1="67.6" x2="656.5" y2="67.6" stroke="#6a7a8a" stroke-width="0.6" />
<path d="M657.4 62.6Q658.3 63.4 657.5 64.3L650.2 71.3L648.9 70L656.2 62.8Q656.8 62.2 657.4 62.6Z" stroke="#666" stroke-width="0.8" fill="#f2f2f2" />
<path d="M649 70L650.3 71.3Q649.4 74.4 643.4 75.2Q646 73 645.7 71.2Q647 69.2 649 70Z" stroke="#1f6fbe" stroke-width="0.6" fill="#3a96e3" />
<path d="M655.05 93.20L656.60 94.80L658.15 93.20" stroke="#3a3a3a" stroke-width="1.0" fill="none" stroke-linecap="round" stroke-linejoin="round" opacity="1"/>
<rect x="668.9" y="58.5" width="60" height="39.6" fill="#fff" stroke="#d0d0d0" stroke-width="0.9" rx="3" />
<rect x="670.2" y="60.6" width="60" height="17.6" fill="#fff" stroke="#8a8a8a" stroke-width="1.1" rx="1" />
<rect x="671.4" y="80.3" width="60" height="14.4" fill="#ffeb9c" stroke="none" stroke-width="1" rx="0" />
<path d="M65.90 129.05L68.60 131.75L71.30 129.05" stroke="#333" stroke-width="1.0" fill="none" stroke-linecap="round" stroke-linejoin="round" opacity="1"/>
<path d="M94.4 126.6L101.4 133.6M101.4 126.6L94.4 133.6" stroke="#c2c2c2" stroke-width="0.9" fill="none" />
<path d="M108.6 130.4L111.6 133.5L117.8 126.6" stroke="#c2c2c2" stroke-width="0.9" fill="none" />
<text x="125.8" y="133.2" font-family="Liberation Serif, serif" font-style="italic" font-size="10.5" fill="#333" textLength="9.6" lengthAdjust="spacingAndGlyphs">fx</text>
<path d="M138.40 129.30L140.60 131.50L142.80 129.30" stroke="#666" stroke-width="1.0" fill="none" stroke-linecap="round" stroke-linejoin="round" opacity="1"/>
</svg>
<span class="t" style="left:31.25px;top:11.70px;font-size:8.5px;color:#ffffff;transform:scaleX(0.843);-webkit-text-stroke:0.25px #fff;">AutoSave</span>
<span class="t" style="left:81.09px;top:11.70px;font-size:8.5px;color:#ffffff;transform:scaleX(1.017);-webkit-text-stroke:0.2px #fff;">Off</span>
<span class="t" style="left:198.00px;top:12.06px;font-size:8.8px;color:#ffffff;transform:scaleX(0.879);-webkit-text-stroke:0.28px #fff;">Analiza prodaje</span>
<span class="t" style="left:536.11px;top:11.76px;font-size:8.8px;color:#26704a;transform:scaleX(0.965);">Search</span>
<span class="t" style="left:13.88px;top:36.86px;font-size:9px;color:#262626;transform:scaleX(0.892);-webkit-text-stroke:0.13px;">File</span>
<span class="t" style="left:43.27px;top:36.86px;font-size:9px;color:#1a1a1a;transform:scaleX(1.046);-webkit-text-stroke:0.32px #1a1a1a;">Home</span>
<span class="t" style="left:79.72px;top:36.86px;font-size:9px;color:#262626;transform:scaleX(0.970);-webkit-text-stroke:0.13px;">Insert</span>
<span class="t" style="left:114.31px;top:36.86px;font-size:9px;color:#262626;transform:scaleX(0.983);-webkit-text-stroke:0.13px;">Draw</span>
<span class="t" style="left:147.85px;top:36.86px;font-size:9px;color:#262626;transform:scaleX(0.934);-webkit-text-stroke:0.13px;">Page Layout</span>
<span class="t" style="left:208.84px;top:36.86px;font-size:9px;color:#262626;transform:scaleX(0.938);-webkit-text-stroke:0.13px;">Formulas</span>
<span class="t" style="left:256.85px;top:36.86px;font-size:9px;color:#262626;transform:scaleX(0.926);-webkit-text-stroke:0.13px;">Data</span>
<span class="t" style="left:287.60px;top:36.86px;font-size:9px;color:#262626;transform:scaleX(0.927);-webkit-text-stroke:0.13px;">Review</span>
<span class="t" style="left:327.50px;top:36.86px;font-size:9px;color:#262626;transform:scaleX(0.902);-webkit-text-stroke:0.13px;">View</span>
<span class="t" style="left:360.00px;top:36.86px;font-size:9px;color:#262626;transform:scaleX(0.930);-webkit-text-stroke:0.13px;">Automate</span>
<span class="t" style="left:409.83px;top:36.86px;font-size:9px;color:#262626;transform:scaleX(0.952);-webkit-text-stroke:0.13px;">Developer</span>
<span class="t" style="left:461.82px;top:36.86px;font-size:9px;color:#262626;transform:scaleX(0.974);-webkit-text-stroke:0.13px;">Help</span>
<span class="t" style="left:493.60px;top:36.86px;font-size:9px;color:#262626;transform:scaleX(0.926);-webkit-text-stroke:0.13px;">Power Pivot</span>
<span class="t" style="left:16.89px;top:79.60px;font-size:8.6px;color:#262626;transform:scaleX(0.871);-webkit-text-stroke:0.13px;">Paste</span>
<span class="t" style="left:57.14px;top:57.55px;font-size:8.6px;color:#262626;transform:scaleX(0.908);-webkit-text-stroke:0.13px;">Cut</span>
<span class="t" style="left:57.14px;top:74.65px;font-size:8.6px;color:#262626;transform:scaleX(0.889);-webkit-text-stroke:0.13px;">Copy</span>
<span class="t" style="left:56.87px;top:91.35px;font-size:8.6px;color:#262626;transform:scaleX(0.901);-webkit-text-stroke:0.13px;">Format Painter</span>
<span class="t" style="left:41.37px;top:106.15px;font-size:8.2px;color:#444;transform:scaleX(0.958);-webkit-text-stroke:0.13px;">Clipboard</span>
<span class="t" style="left:182.38px;top:106.15px;font-size:8.2px;color:#444;transform:scaleX(0.954);-webkit-text-stroke:0.13px;">Font</span>
<span class="t" style="left:347.50px;top:106.15px;font-size:8.2px;color:#444;transform:scaleX(0.947);-webkit-text-stroke:0.13px;">Alignment</span>
<span class="t" style="left:502.40px;top:106.15px;font-size:8.2px;color:#444;transform:scaleX(0.916);-webkit-text-stroke:0.13px;">Number</span>
<span class="t" style="left:125.87px;top:62.10px;font-size:8.6px;color:#262626;transform:scaleX(0.940);-webkit-text-stroke:0.13px;">Calibri</span>
<span class="t" style="left:207.80px;top:62.10px;font-size:8.6px;color:#262626;transform:scaleX(0.773);-webkit-text-stroke:0.13px;">11</span>
<span class="t" style="left:129.27px;top:82.17px;font-size:9.5px;color:#262626;font-weight:700;transform:scaleX(0.889);">B</span>
<span class="t" style="left:147.20px;top:81.69px;font-size:10.5px;color:#262626;font-style:italic;font-family:'Liberation Serif',serif;">I</span>
<span class="t" style="left:162.04px;top:81.96px;font-size:9px;color:#262626;transform:scaleX(1.019);-webkit-text-stroke:0.13px;">U</span>
<span class="t" style="left:387.00px;top:62.85px;font-size:8.6px;color:#262626;transform:scaleX(0.870);-webkit-text-stroke:0.13px;">Wrap Text</span>
<span class="t" style="left:386.36px;top:83.75px;font-size:8.6px;color:#262626;transform:scaleX(0.918);-webkit-text-stroke:0.13px;">Merge &amp; Center</span>
<span class="t" style="left:475.40px;top:62.10px;font-size:8.6px;color:#262626;transform:scaleX(0.886);-webkit-text-stroke:0.13px;">General</span>
<span class="t" style="left:502.87px;top:81.17px;font-size:12.5px;color:#333;transform:scaleX(0.947);">%</span>
<span class="t" style="left:582.82px;top:79.15px;font-size:8.6px;color:#262626;transform:scaleX(0.944);-webkit-text-stroke:0.13px;">Conditional</span>
<span class="t" style="left:580.24px;top:89.35px;font-size:8.6px;color:#262626;transform:scaleX(0.938);-webkit-text-stroke:0.13px;">Formatting</span>
<span class="t" style="left:629.98px;top:79.15px;font-size:8.6px;color:#262626;transform:scaleX(0.891);-webkit-text-stroke:0.13px;">Format as</span>
<span class="t" style="left:635.57px;top:89.35px;font-size:8.6px;color:#262626;transform:scaleX(0.837);-webkit-text-stroke:0.13px;">Table</span>
<span class="t" style="left:673.77px;top:63.97px;font-size:9.6px;color:#111;transform:scaleX(0.971);">Normal</span>
<span class="t" style="left:673.75px;top:82.47px;font-size:9.6px;color:#9c5700;">Neutral</span>
<span class="t" style="left:9.61px;top:125.62px;font-size:9.3px;color:#262626;transform:scaleX(0.858);-webkit-text-stroke:0.13px;">B2</span>
<span class="t" style="left:154.38px;top:125.62px;font-size:9.3px;color:#262626;transform:scaleX(0.788);-webkit-text-stroke:0.13px;">SALES</span>
<span class="t" style="left:73.09px;top:144.69px;font-size:10.8px;color:#262626;transform:scaleX(0.920);-webkit-text-stroke:0.13px;">A</span>
<span class="t" style="left:228.27px;top:144.69px;font-size:10.8px;color:#262626;transform:scaleX(0.920);-webkit-text-stroke:0.13px;">C</span>
<span class="t" style="left:278.15px;top:144.69px;font-size:10.8px;color:#262626;transform:scaleX(0.920);-webkit-text-stroke:0.13px;">D</span>
<span class="t" style="left:328.40px;top:144.69px;font-size:10.8px;color:#262626;transform:scaleX(0.920);-webkit-text-stroke:0.13px;">E</span>
<span class="t" style="left:378.66px;top:144.69px;font-size:10.8px;color:#262626;transform:scaleX(0.920);-webkit-text-stroke:0.13px;">F</span>
<span class="t" style="left:428.17px;top:144.69px;font-size:10.8px;color:#262626;transform:scaleX(0.920);-webkit-text-stroke:0.13px;">G</span>
<span class="t" style="left:478.31px;top:144.69px;font-size:10.8px;color:#262626;transform:scaleX(0.920);-webkit-text-stroke:0.13px;">H</span>
<span class="t" style="left:530.52px;top:144.69px;font-size:10.8px;color:#262626;transform:scaleX(0.920);-webkit-text-stroke:0.13px;">I</span>
<span class="t" style="left:579.72px;top:144.69px;font-size:10.8px;color:#262626;transform:scaleX(0.920);-webkit-text-stroke:0.13px;">J</span>
<span class="t" style="left:628.24px;top:144.69px;font-size:10.8px;color:#262626;transform:scaleX(0.920);-webkit-text-stroke:0.13px;">K</span>
<span class="t" style="left:678.91px;top:144.69px;font-size:10.8px;color:#262626;transform:scaleX(0.920);-webkit-text-stroke:0.13px;">L</span>
<span class="t" style="left:164.95px;top:144.69px;font-size:10.8px;color:#1e6b41;transform:scaleX(0.920);">B</span>
<span class="t" style="left:8.05px;top:177.09px;font-size:10.6px;color:#262626;transform:scaleX(0.950);-webkit-text-stroke:0.13px;">1</span>
<span class="t" style="left:8.20px;top:192.49px;font-size:10.6px;color:#1e6b41;transform:scaleX(0.950);">2</span>
<span class="t" style="left:8.22px;top:208.12px;font-size:10.6px;color:#262626;transform:scaleX(0.950);-webkit-text-stroke:0.13px;">3</span>
<span class="t" style="left:8.25px;top:223.74px;font-size:10.6px;color:#262626;transform:scaleX(0.950);-webkit-text-stroke:0.13px;">4</span>
<span class="t" style="left:8.22px;top:239.37px;font-size:10.6px;color:#262626;transform:scaleX(0.950);-webkit-text-stroke:0.13px;">5</span>
<span class="t" style="left:8.17px;top:254.99px;font-size:10.6px;color:#262626;transform:scaleX(0.950);-webkit-text-stroke:0.13px;">6</span>
<span class="t" style="left:8.20px;top:270.62px;font-size:10.6px;color:#262626;transform:scaleX(0.950);-webkit-text-stroke:0.13px;">7</span>
<span class="t" style="left:8.20px;top:286.24px;font-size:10.6px;color:#262626;transform:scaleX(0.950);-webkit-text-stroke:0.13px;">8</span>
<span class="t" style="left:8.22px;top:301.87px;font-size:10.6px;color:#262626;transform:scaleX(0.950);-webkit-text-stroke:0.13px;">9</span>
<span class="t" style="left:5.21px;top:317.49px;font-size:10.6px;color:#262626;transform:scaleX(0.950);-webkit-text-stroke:0.13px;">10</span>
<span class="t" style="left:5.63px;top:333.12px;font-size:10.6px;color:#262626;transform:scaleX(0.950);-webkit-text-stroke:0.13px;">11</span>
<span class="t" style="left:5.25px;top:348.74px;font-size:10.6px;color:#262626;transform:scaleX(0.950);-webkit-text-stroke:0.13px;">12</span>
<span class="t" style="left:5.23px;top:364.37px;font-size:10.6px;color:#262626;transform:scaleX(0.950);-webkit-text-stroke:0.13px;">13</span>
<span class="t" style="left:5.16px;top:379.99px;font-size:10.6px;color:#262626;transform:scaleX(0.950);-webkit-text-stroke:0.13px;">14</span>
<span class="t" style="left:5.23px;top:395.62px;font-size:10.6px;color:#262626;transform:scaleX(0.950);-webkit-text-stroke:0.13px;">15</span>
<span class="t" style="left:5.23px;top:411.24px;font-size:10.6px;color:#262626;transform:scaleX(0.950);-webkit-text-stroke:0.13px;">16</span>
<span class="t" style="left:5.25px;top:426.87px;font-size:10.6px;color:#262626;transform:scaleX(0.950);-webkit-text-stroke:0.13px;">17</span>
<span class="t" style="left:5.23px;top:442.49px;font-size:10.6px;color:#262626;transform:scaleX(0.950);-webkit-text-stroke:0.13px;">18</span>
<span class="t" style="left:5.25px;top:458.12px;font-size:10.6px;color:#262626;transform:scaleX(0.950);-webkit-text-stroke:0.13px;">19</span>
<span class="t" style="left:5.35px;top:473.74px;font-size:10.6px;color:#262626;transform:scaleX(0.950);-webkit-text-stroke:0.13px;">20</span>
<span class="t" style="left:24.79px;top:162.28px;font-size:15.4px;color:#000;font-weight:700;transform:scaleX(0.888);">Sales Analysis</span>
<span class="t" style="left:23.34px;top:193.18px;font-size:10.2px;color:#000;transform:scaleX(1.016);-webkit-text-stroke:0.18px #000;">ITEM NAME</span>
<span class="t" style="left:153.91px;top:193.18px;font-size:10.2px;color:#000;transform:scaleX(0.857);-webkit-text-stroke:0.18px #000;">SALES</span>
<span class="t" style="left:24.15px;top:208.81px;font-size:10.2px;color:#000;transform:scaleX(0.996);-webkit-text-stroke:0.18px #000;">Sauvignon Akacia</span>
<span class="t" style="left:142.22px;top:208.81px;font-size:10.2px;color:#000;transform:scaleX(1.040);-webkit-text-stroke:0.18px #000;">1.749.000,00</span>
<span class="t" style="left:24.15px;top:224.43px;font-size:10.2px;color:#000;transform:scaleX(1.005);-webkit-text-stroke:0.18px #000;">Sauvignon blanc</span>
<span class="t" style="left:142.22px;top:224.43px;font-size:10.2px;color:#000;transform:scaleX(1.040);-webkit-text-stroke:0.18px #000;">1.745.220,00</span>
<span class="t" style="left:24.09px;top:240.06px;font-size:10.2px;color:#000;transform:scaleX(1.019);-webkit-text-stroke:0.18px #000;">Chardonnay</span>
<span class="t" style="left:142.22px;top:240.06px;font-size:10.2px;color:#000;transform:scaleX(1.040);-webkit-text-stroke:0.18px #000;">1.830.180,00</span>
<span class="t" style="left:23.77px;top:255.68px;font-size:10.2px;color:#000;transform:scaleX(1.034);-webkit-text-stroke:0.18px #000;">Portugizer</span>
<span class="t" style="left:142.22px;top:255.68px;font-size:10.2px;color:#000;transform:scaleX(1.040);-webkit-text-stroke:0.18px #000;">1.696.380,00</span>
<span class="t" style="left:23.69px;top:271.31px;font-size:10.2px;color:#000;transform:scaleX(1.142);-webkit-text-stroke:0.18px #000;">Merlot</span>
<span class="t" style="left:142.48px;top:271.31px;font-size:10.2px;color:#000;transform:scaleX(1.036);-webkit-text-stroke:0.18px #000;">2.036.880,00</span>
<span class="t" style="left:403.27px;top:199.23px;font-size:12.8px;color:#505050;transform:scaleX(0.872);">SALES</span>
<span class="t" style="left:240.85px;top:222.25px;font-size:8.6px;color:#505050;">2.500.000,00</span>
<span class="t" style="left:240.85px;top:252.25px;font-size:8.6px;color:#505050;">2.000.000,00</span>
<span class="t" style="left:240.60px;top:282.25px;font-size:8.6px;color:#505050;transform:scaleX(1.005);">1.500.000,00</span>
<span class="t" style="left:240.60px;top:312.25px;font-size:8.6px;color:#505050;transform:scaleX(1.005);">1.000.000,00</span>
<span class="t" style="left:248.40px;top:342.25px;font-size:8.6px;color:#505050;transform:scaleX(0.992);">500.000,00</span>
<span class="t" style="left:274.30px;top:372.25px;font-size:8.6px;color:#505050;">0,00</span>
<span class="t" style="left:309.66px;top:384.61px;font-size:8.7px;color:#505050;transform:scaleX(0.969);">Sauvignon</span>
<span class="t" style="left:317.30px;top:395.81px;font-size:8.7px;color:#505050;transform:scaleX(0.926);">Akacia</span>
<span class="t" style="left:369.16px;top:384.61px;font-size:8.7px;color:#505050;transform:scaleX(0.969);">Sauvignon</span>
<span class="t" style="left:378.77px;top:395.81px;font-size:8.7px;color:#505050;transform:scaleX(0.958);">blanc</span>
<span class="t" style="left:425.01px;top:384.61px;font-size:8.7px;color:#505050;transform:scaleX(0.970);">Chardonnay</span>
<span class="t" style="left:488.01px;top:384.61px;font-size:8.7px;color:#505050;transform:scaleX(0.986);">Portugizer</span>
<span class="t" style="left:554.24px;top:384.61px;font-size:8.7px;color:#505050;transform:scaleX(1.083);">Merlot</span>
</body></html>
